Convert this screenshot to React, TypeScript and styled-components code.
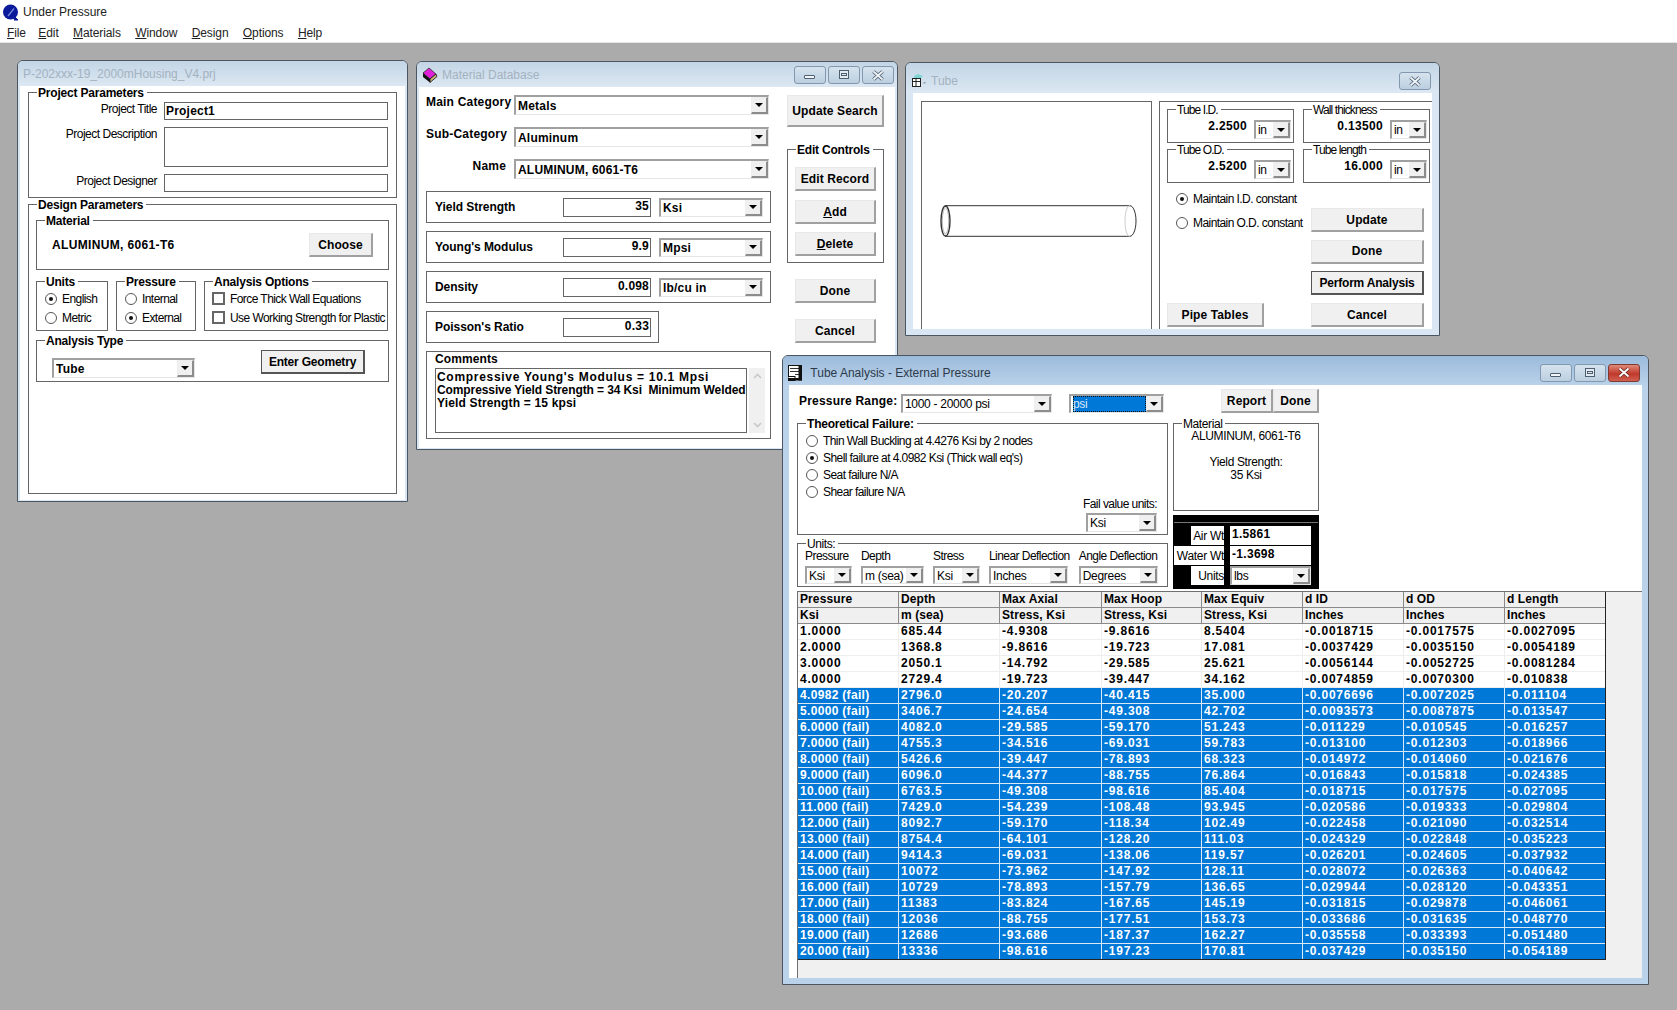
import React from "react";
import styled, { createGlobalStyle } from "styled-components";

const GlobalStyle = createGlobalStyle`
  html, body { margin: 0; padding: 0; background: #ababab; }
  body { font-family: "Liberation Sans", Arial, sans-serif; font-size: 12px; color: #000; overflow: hidden; }
  * { box-sizing: border-box; }
`;

const Page = styled.div`
  position: relative;
  width: 1677px;
  height: 1010px;
  display: flex;
  flex-direction: column;
  background: #ababab;
  overflow: hidden;
`;
const AppTitle = styled.div`
  height: 23px;
  background: #fff;
  display: flex;
  align-items: center;
  padding-left: 2px;
  gap: 3px;
  color: #222;
  font-size: 12px;
`;
const MenuBar = styled.div`
  height: 20px;
  background: #fff;
  border-bottom: 1px solid #e4e4e4;
  display: flex;
  padding-left: 7px;
  gap: 14.4px;
  align-items: center;
  color: #222;
  letter-spacing: -0.1px;
  & > :first-child {
    margin-right: -2px;
  }
`;

// mdi windows
const Window = styled.div<{ $x: number; $y: number; $w: number; $h: number; $active?: boolean }>`
  position: absolute;
  left: ${(p) => p.$x}px;
  top: ${(p) => p.$y}px;
  width: ${(p) => p.$w}px;
  height: ${(p) => p.$h}px;
  border: 1px solid #4c5660;
  border-radius: 6px 6px 0 0;
  background: ${(p) => (p.$active ? "#bad2ea" : "#d9e6f3")};
  display: flex;
  flex-direction: column;
  overflow: hidden;
`;
const TitleBar = styled.div<{ $h: number; $active?: boolean; $pad?: number; $pt?: number }>`
  height: ${(p) => p.$h}px;
  flex: none;
  display: flex;
  align-items: center;
  padding: ${(p) => p.$pt ?? 0}px ${(p) => p.$pad ?? 3}px 0 5px;
  gap: 4px;
  color: ${(p) => (p.$active ? "#2c3a48" : "#a3b2c0")};
  background: ${(p) =>
    p.$active ? "linear-gradient(#9cbbdb, #b9d1ea)" : "linear-gradient(#c3d5e5, #dce8f3)"};
  letter-spacing: 0;
`;
const Controls = styled.div`
  margin-left: auto;
  display: flex;
  gap: 2px;
`;
const CtlBtn = styled.div<{ $red?: boolean }>`
  width: 32px;
  height: 18px;
  border: 1px solid ${(p) => (p.$red ? "#7d3a32" : "#8298ae")};
  border-radius: 3px;
  background: ${(p) =>
    p.$red ? "linear-gradient(#e08a78, #c0392b 55%, #d2604f)" : "linear-gradient(#d6e3ee, #bccfe0)"};
  display: flex;
  align-items: center;
  justify-content: center;
`;
const Client = styled.div<{ $mx: number; $mb: number; $pad?: string }>`
  flex: 1;
  min-height: 0;
  margin: 0 ${(p) => p.$mx}px ${(p) => p.$mb}px;
  background: #fff;
  padding: ${(p) => p.$pad ?? "0"};
  display: flex;
  flex-direction: column;
`;

const Group = styled.div<{ $w?: number; $h?: number; $pad?: string; $mt?: number }>`
  position: relative;
  flex: none;
  width: ${(p) => (p.$w ? `${p.$w}px` : "auto")};
  height: ${(p) => (p.$h ? `${p.$h}px` : "auto")};
  border: 1px solid #666;
  padding: ${(p) => p.$pad ?? "0"};
  margin-top: ${(p) => p.$mt ?? 0}px;
`;
const Legend = styled.span<{ $regular?: boolean; $narrow?: boolean }>`
  position: absolute;
  left: 8px;
  top: -7px;
  height: 14px;
  line-height: 14px;
  padding: 0 3px 0 1px;
  background: #fff;
  font-weight: ${(p) => (p.$regular ? 400 : 700)};
  letter-spacing: ${(p) => (p.$narrow ? "-0.9px" : p.$regular ? "-0.4px" : "-0.2px")};
  white-space: nowrap;
`;
const Btn = styled.div<{ $w: number; $h?: number; $dark?: boolean; $mt?: number }>`
  flex: none;
  width: ${(p) => p.$w}px;
  height: ${(p) => p.$h ?? 24}px;
  margin-top: ${(p) => p.$mt ?? 0}px;
  background: #f0f0f0;
  border: 1px solid ${(p) => (p.$dark ? "#555" : "#e8e8e8")};
  border-right: 2px solid ${(p) => (p.$dark ? "#555" : "#a0a0a0")};
  border-bottom: 2px solid ${(p) => (p.$dark ? "#555" : "#a0a0a0")};
  display: flex;
  align-items: center;
  justify-content: center;
  font-weight: 700;
  letter-spacing: ${(p) => (p.$dark ? "-0.2px" : "0.1px")};
  white-space: nowrap;
`;
const ComboBox = styled.div<{ $w: number; $h?: number; $bold?: boolean; $mt?: number }>`
  flex: none;
  width: ${(p) => p.$w}px;
  height: ${(p) => p.$h ?? 19}px;
  margin-top: ${(p) => p.$mt ?? 0}px;
  background: #fff;
  border: 1px solid #e6e6e6;
  border-top: 2px solid #a0a0a0;
  border-left: 2px solid #a0a0a0;
  display: flex;
  align-items: center;
  padding-left: 2px;
  font-weight: ${(p) => (p.$bold ? 700 : 400)};
  letter-spacing: ${(p) => (p.$bold ? "0.2px" : "-0.3px")};
  overflow: hidden;
  white-space: nowrap;
`;
const ComboValue = styled.span<{ $sel?: boolean }>`
  flex: 1;
  min-width: 0;
  align-self: stretch;
  display: flex;
  align-items: center;
  overflow: hidden;
  ${(p) => (p.$sel ? "background:#0078d7;color:#d8e8f8;outline:1px dotted #111;outline-offset:-1px;" : "")}
`;
const ComboArrow = styled.span`
  flex: none;
  width: 17px;
  align-self: stretch;
  background: #f0f0f0;
  border: 1px solid #eee;
  border-right: 2px solid #8c8c8c;
  border-bottom: 2px solid #8c8c8c;
  display: flex;
  align-items: center;
  justify-content: center;
  &::after {
    content: "";
    border: 4px solid transparent;
    border-top: 4px solid #000;
    border-bottom: 0;
  }
`;
function Combo(props: { w: number; h?: number; bold?: boolean; mt?: number; sel?: boolean; children: React.ReactNode }) {
  return (
    <ComboBox $w={props.w} $h={props.h} $bold={props.bold} $mt={props.mt}>
      <ComboValue $sel={props.sel}>{props.children}</ComboValue>
      <ComboArrow />
    </ComboBox>
  );
}
const TextBox = styled.div<{ $w?: number; $h: number }>`
  flex: none;
  width: ${(p) => (p.$w ? `${p.$w}px` : "auto")};
  height: ${(p) => p.$h}px;
  border: 1px solid #666;
  background: #fff;
  padding: 0 1px 2px 2px;
  display: flex;
  align-items: center;
  justify-content: flex-end;
  font-weight: 700;
  letter-spacing: 0.2px;
`;

const OptionRow = styled.div<{ $h: number }>`
  height: ${(p) => p.$h}px;
  display: flex;
  align-items: center;
  gap: 5px;
  letter-spacing: -0.57px;
  white-space: nowrap;
`;
const RadioDot = styled.span<{ $on?: boolean }>`
  flex: none;
  width: 12px;
  height: 12px;
  border-radius: 50%;
  border: 1.5px solid #555;
  background: #fff;
  display: flex;
  align-items: center;
  justify-content: center;
  &::after {
    content: "";
    width: 4px;
    height: 4px;
    border-radius: 50%;
    background: ${(p) => (p.$on ? "#111" : "transparent")};
  }
`;
const CheckBox = styled.span`
  flex: none;
  width: 13px;
  height: 13px;
  border: 2px solid #666;
  background: #fff;
`;

/* ---------- project window ---------- */
const ProjectGrid = styled.div`
  display: grid;
  grid-template-columns: 128px 224px;
  column-gap: 7px;
  grid-template-rows: 18px 40px 18px;
  row-gap: 7px;
`;
const FieldLabel = styled.div`
  text-align: right;
  letter-spacing: -0.5px;
  line-height: 14px;
`;
const OutlineBox = styled.div`
  border: 1px solid #666;
  padding: 1px 1px;
  font-weight: 700;
  letter-spacing: 0.2px;
  line-height: 14px;
`;
const BoldText = styled.span`
  font-weight: 700;
  letter-spacing: 0.35px;
`;
const SpacedRow = styled.div`
  height: 100%;
  display: flex;
  align-items: center;
  justify-content: space-between;
`;
const GroupRow = styled.div<{ $gap: number; $mt: number }>`
  display: flex;
  gap: ${(p) => p.$gap}px;
  margin-top: ${(p) => p.$mt}px;
`;
const TopRow = styled.div`
  display: flex;
  justify-content: space-between;
  align-items: flex-start;
`;

/* ---------- material window ---------- */
const DbLayout = styled.div`
  display: flex;
  gap: 16px;
`;
const Column = styled.div<{ $center?: boolean; $gap?: number }>`
  display: flex;
  flex-direction: column;
  align-items: ${(p) => (p.$center ? "center" : "stretch")};
  gap: ${(p) => p.$gap ?? 0}px;
`;
const CategoryRow = styled.div`
  display: flex;
  gap: 8px;
  margin-bottom: 12px;
`;
const CategoryLabel = styled.div`
  width: 80px;
  text-align: right;
  font-weight: 700;
  letter-spacing: 0.2px;
  white-space: nowrap;
`;
const PropRow = styled.div<{ $w: number }>`
  width: ${(p) => p.$w}px;
  height: 32px;
  border: 1px solid #666;
  margin-bottom: 8px;
  display: flex;
  align-items: center;
  padding-left: 8px;
  gap: 8px;
`;
const PropLabel = styled.div`
  width: 120px;
  font-weight: 700;
  letter-spacing: -0.05px;
  margin-top: -1px;
`;
const CommentHead = styled.div`
  font-weight: 700;
  letter-spacing: 0.1px;
  line-height: 14px;
  height: 14px;
`;
const CommentBody = styled.div`
  display: flex;
  gap: 2px;
  margin-top: 2px;
`;
const CommentText = styled.div`
  width: 312px;
  height: 65px;
  border: 1px solid #666;
  padding: 2px 0 0 1px;
  font-weight: 700;
  line-height: 13px;
  overflow: hidden;
`;
const CommentLine = styled.div<{ $ls: number }>`
  letter-spacing: ${(p) => p.$ls}px;
  white-space: nowrap;
`;
const ScrollTrack = styled.div`
  width: 16px;
  height: 65px;
  background: #f0f0f0;
  display: flex;
  flex-direction: column;
  justify-content: space-between;
  align-items: center;
  padding: 5px 0;
`;

/* ---------- tube window ---------- */
const TubeLayout = styled.div`
  flex: 1;
  min-height: 0;
  display: flex;
  gap: 7px;
`;
const Picture = styled.div`
  width: 231px;
  border: 1px solid #666;
  border-bottom: 0;
  display: flex;
  align-items: center;
  padding: 10px 0 0 18px;
`;
const TubeFrame = styled.div`
  flex: 1;
  border-left: 1px solid #666;
  border-top: 1px solid #666;
  padding: 7px 0 0 7px;
`;
const SizeGrid = styled.div`
  display: grid;
  grid-template-columns: 127px 127px;
  column-gap: 9px;
  row-gap: 6px;
`;
const SizeBox = styled.div`
  position: relative;
  height: 34px;
  border: 1px solid #666;
  padding: 9px 2px 0 0;
  display: flex;
  justify-content: flex-end;
  gap: 7px;
`;
const SizeValue = styled.span`
  font-weight: 700;
  letter-spacing: 0.35px;
  line-height: 14px;
`;
const TubeLower = styled.div`
  display: flex;
  height: 144px;
`;
const TubeLeft = styled.div`
  width: 144px;
  height: 100%;
  padding: 4px 0 0 9px;
  display: flex;
  flex-direction: column;
`;
const PipeWrap = styled.div`
  margin: auto 0 0 -9px;
`;
const TubeButtons = styled.div`
  display: flex;
  flex-direction: column;
  gap: 7.7px;
  padding-top: 25px;
`;

/* ---------- analysis window ---------- */
const AnalysisTop = styled.div`
  display: flex;
  align-items: flex-start;
  padding: 4px 0 0 10px;
  height: 28px;
`;
const RangeLabel = styled.div`
  width: 102px;
  font-weight: 700;
  letter-spacing: 0.2px;
  margin-top: 5px;
`;
const PsiWrap = styled.div`
  margin: 5px 57px 0 17px;
`;
const Panels = styled.div`
  display: grid;
  grid-template-columns: 371px 146px;
  gap: 5px;
  margin: 10px 0 0 8px;
`;
const FailBody = styled.div`
  height: 100%;
  display: flex;
  justify-content: space-between;
  padding: 8px 10px 2px 8px;
`;
const FailUnit = styled.div`
  display: flex;
  flex-direction: column;
  align-items: flex-end;
  justify-content: flex-end;
  gap: 2px;
  letter-spacing: -0.55px;
`;
const UnitsRow = styled.div`
  display: flex;
  gap: 9px;
  padding: 5px 0 0 7px;
`;
const UnitCol = styled.div`
  display: flex;
  flex-direction: column;
  gap: 3px;
  line-height: 14px;
  letter-spacing: -0.55px;
  white-space: nowrap;
`;
const MaterialText = styled.div`
  padding-top: 6px;
  text-align: center;
  line-height: 13px;
  letter-spacing: -0.35px;
`;
const WeightBox = styled.div`
  height: 74px;
  background: #000;
  border-top: 6px solid #000;
  display: flex;
  flex-direction: column;
`;
const WeightInner = styled.div`
  flex: 1;
  margin: 1px 1px 0 1px;
  padding: 3px 7px 0 0;
  border-top: 1px solid #777;
  display: flex;
  flex-direction: column;
  gap: 1px;
`;
const WeightRow = styled.div`
  display: flex;
  justify-content: flex-end;
  gap: 6px;
  height: 19px;
`;
const WeightLabel = styled.div<{ $w: number }>`
  width: ${(p) => p.$w}px;
  background: #fff;
  text-align: right;
  overflow: hidden;
  white-space: nowrap;
  letter-spacing: -0.3px;
  line-height: 20px;
`;
const WeightValue = styled.div`
  width: 81px;
  background: #fff;
  font-weight: 700;
  padding-left: 2px;
  letter-spacing: 0.3px;
  line-height: 16px;
`;
const GridArea = styled.div`
  flex: 1;
  min-height: 0;
  margin: 2px 0 0 8px;
  border-top: 1px solid #707070;
  border-left: 1px solid #707070;
  background: #f0f0f0;
`;
const Table = styled.div`
  width: 808px;
  border-right: 1px solid #222;
  border-bottom: 1px solid #222;
`;
const Cells = styled.div<{ $head?: boolean; $fail?: boolean }>`
  display: grid;
  grid-template-columns: 101px 101px 102px 100px 101px 101px 101px 100px;
  height: 16px;
  background: ${(p) => (p.$head ? "#f0f0f0" : p.$fail ? "#0078d7" : "#fff")};
  color: ${(p) => (p.$fail ? "#fff" : "#000")};
  border-bottom: 1px solid ${(p) => (p.$head ? "#8a8a8a" : p.$fail ? "#dbe9f6" : "#eeeeee")};
  &:last-child {
    border-bottom: 0;
    height: 15px;
  }
`;
const Cell = styled.div<{ $head?: boolean; $fail?: boolean; $tight?: boolean }>`
  padding-left: 2px;
  border-right: 1px solid ${(p) => (p.$head ? "#8a8a8a" : p.$fail ? "#dbe9f6" : "#eeeeee")};
  font-weight: 700;
  line-height: 15px;
  letter-spacing: ${(p) => (p.$head ? "0.1px" : p.$tight ? "0.32px" : "0.8px")};
  white-space: nowrap;
  overflow: hidden;
  &:last-child {
    border-right: 0;
  }
`;

const head1 = ["Pressure", "Depth", "Max Axial", "Max Hoop", "Max Equiv", "d ID", "d OD", "d Length"];
const head2 = ["Ksi", "m (sea)", "Stress, Ksi", "Stress, Ksi", "Stress, Ksi", "Inches", "Inches", "Inches"];
const rows = [
  "1.0000|685.44|-4.9308|-9.8616|8.5404|-0.0018715|-0.0017575|-0.0027095",
  "2.0000|1368.8|-9.8616|-19.723|17.081|-0.0037429|-0.0035150|-0.0054189",
  "3.0000|2050.1|-14.792|-29.585|25.621|-0.0056144|-0.0052725|-0.0081284",
  "4.0000|2729.4|-19.723|-39.447|34.162|-0.0074859|-0.0070300|-0.010838",
  "4.0982 (fail)|2796.0|-20.207|-40.415|35.000|-0.0076696|-0.0072025|-0.011104",
  "5.0000 (fail)|3406.7|-24.654|-49.308|42.702|-0.0093573|-0.0087875|-0.013547",
  "6.0000 (fail)|4082.0|-29.585|-59.170|51.243|-0.011229|-0.010545|-0.016257",
  "7.0000 (fail)|4755.3|-34.516|-69.031|59.783|-0.013100|-0.012303|-0.018966",
  "8.0000 (fail)|5426.6|-39.447|-78.893|68.323|-0.014972|-0.014060|-0.021676",
  "9.0000 (fail)|6096.0|-44.377|-88.755|76.864|-0.016843|-0.015818|-0.024385",
  "10.000 (fail)|6763.5|-49.308|-98.616|85.404|-0.018715|-0.017575|-0.027095",
  "11.000 (fail)|7429.0|-54.239|-108.48|93.945|-0.020586|-0.019333|-0.029804",
  "12.000 (fail)|8092.7|-59.170|-118.34|102.49|-0.022458|-0.021090|-0.032514",
  "13.000 (fail)|8754.4|-64.101|-128.20|111.03|-0.024329|-0.022848|-0.035223",
  "14.000 (fail)|9414.3|-69.031|-138.06|119.57|-0.026201|-0.024605|-0.037932",
  "15.000 (fail)|10072|-73.962|-147.92|128.11|-0.028072|-0.026363|-0.040642",
  "16.000 (fail)|10729|-78.893|-157.79|136.65|-0.029944|-0.028120|-0.043351",
  "17.000 (fail)|11383|-83.824|-167.65|145.19|-0.031815|-0.029878|-0.046061",
  "18.000 (fail)|12036|-88.755|-177.51|153.73|-0.033686|-0.031635|-0.048770",
  "19.000 (fail)|12686|-93.686|-187.37|162.27|-0.035558|-0.033393|-0.051480",
  "20.000 (fail)|13336|-98.616|-197.23|170.81|-0.037429|-0.035150|-0.054189",
];

const MinIcon = () => (
  <svg width="14" height="10" viewBox="0 0 14 10">
    <rect x="1.5" y="5.5" width="10" height="3" rx="0.5" fill="#f2f6fa" stroke="#4e5f70" />
  </svg>
);
const MaxIcon = () => (
  <svg width="12" height="10" viewBox="0 0 12 10">
    <rect x="1.5" y="0.5" width="9" height="8" fill="#e2ebf3" stroke="#4e5f70" />
    <rect x="3.5" y="3.5" width="5" height="2" fill="#dfe8f1" stroke="#4e5f70" />
  </svg>
);
const CloseIcon = ({ red }: { red?: boolean }) => (
  <svg width="14" height="11" viewBox="0 0 14 11">
    <path d="M2.5 1.5 L11.5 9.5 M11.5 1.5 L2.5 9.5" stroke={red ? "#6d2a22" : "#4e5f70"} strokeWidth="3.6" />
    <path d="M2.5 1.5 L11.5 9.5 M11.5 1.5 L2.5 9.5" stroke={red ? "#fff" : "#eef3f8"} strokeWidth="1.8" />
  </svg>
);
const AppLogo = () => (
  <svg width="18" height="18" viewBox="0 0 18 18">
    <circle cx="8.5" cy="9" r="7.5" fill="#0a1a9a" />
    <path d="M6 13 L12 5.5" stroke="#6f84d8" strokeWidth="1.4" />
    <path d="M11 12 L16 17 L12 17" fill="#0a1a9a" stroke="#0a1a9a" />
  </svg>
);
const BookIcon = () => (
  <svg width="16" height="16" viewBox="0 0 16 16">
    <path d="M1 6 L7 1 L14 7 L8 12 Z" fill="#e020d8" stroke="#222" strokeWidth="0.7" />
    <path d="M1 6 L8 12 L8 15.5 L1 10 Z" fill="#111" />
    <path d="M8 12 L14 7 L15 9.5 L8 15.5 Z" fill="#c9b27e" stroke="#111" strokeWidth="0.8" />
  </svg>
);
const TubeIcon = () => (
  <svg width="16" height="14" viewBox="0 0 16 14">
    <path d="M3 2 L7 0 L12 2 L9 5 L3 5 Z" fill="#7fd6d0" />
    <rect x="1.5" y="4.5" width="8" height="8" fill="#fff" stroke="#222" />
    <path d="M2 7.5 H9 M5 5 V12" stroke="#222" />
    <rect x="12.5" y="8" width="2" height="1.5" fill="#8a9aa8" />
  </svg>
);
const DocIcon = () => (
  <svg width="15" height="16" viewBox="0 0 15 16">
    <rect x="0.5" y="0.5" width="12" height="14" fill="#fff" stroke="#111" />
    <path d="M2 3.5 H11 M2 6.5 H11 M7 9.5 H11" stroke="#333" />
    <rect x="0" y="11.5" width="7" height="4" fill="#fff" stroke="#111" />
    <rect x="0" y="13" width="14" height="2.5" fill="#111" />
    <rect x="10.5" y="0" width="3.5" height="15.5" fill="#111" />
  </svg>
);
const Chevron = ({ up }: { up?: boolean }) => (
  <svg width="9" height="6" viewBox="0 0 9 6">
    <path d={up ? "M1 5 L4.5 1.5 L8 5" : "M1 1 L4.5 4.5 L8 1"} fill="none" stroke="#c8c8c8" strokeWidth="1.6" />
  </svg>
);
const TubeDrawing = () => (
  <svg width="197" height="32" viewBox="0 0 197 32">
    <path d="M5 0.7 H190" stroke="#333" strokeWidth="1" fill="none" />
    <path d="M5 31.3 H190" stroke="#333" strokeWidth="1" fill="none" />
    <path d="M190 0.7 C 193 0.7 196 7 196 16 C 196 25 193 31.3 190 31.3" stroke="#333" fill="none" />
    <path d="M190 0.7 C 187 0.7 185 7 185 16 C 185 25 187 31.3 190 31.3" stroke="#ccc" fill="none" />
    <ellipse cx="5.5" cy="16" rx="4.5" ry="15" fill="none" stroke="#333" strokeWidth="1.4" />
    <ellipse cx="5.5" cy="16" rx="3.2" ry="13" fill="none" stroke="#888" strokeWidth="0.6" />
  </svg>
);

export default function App() {
  return (
    <Page>
      <GlobalStyle />
      <AppTitle>
        <AppLogo />
        Under Pressure
      </AppTitle>
      <MenuBar>
        <span><u>F</u>ile</span>
        <span><u>E</u>dit</span>
        <span><u>M</u>aterials</span>
        <span><u>W</u>indow</span>
        <span><u>D</u>esign</span>
        <span><u>O</u>ptions</span>
        <span><u>H</u>elp</span>
      </MenuBar>

      {/* project */}
      <Window $x={17} $y={60} $w={391} $h={442}>
        <TitleBar $h={25} $pt={1}>P-202xxx-19_2000mHousing_V4.prj</TitleBar>
        <Client $mx={2} $mb={1} $pad="6px 8px 0 8px">
          <Group $h={106} $pad="9px 0 0 0">
            <Legend>Project Parameters</Legend>
            <ProjectGrid>
              <FieldLabel>Project Title</FieldLabel>
              <OutlineBox>Project1</OutlineBox>
              <FieldLabel>Project Description</FieldLabel>
              <OutlineBox />
              <FieldLabel>Project Designer</FieldLabel>
              <OutlineBox />
            </ProjectGrid>
          </Group>
          <Group $h={290} $mt={6} $pad="15px 7px 0 7px">
            <Legend>Design Parameters</Legend>
            <Group $h={50} $pad="0 15px">
              <Legend>Material</Legend>
              <SpacedRow>
                <BoldText>ALUMINUM, 6061-T6</BoldText>
                <Btn $w={64}>Choose</Btn>
              </SpacedRow>
            </Group>
            <GroupRow $gap={8} $mt={11}>
              <Group $w={72} $h={50} $pad="7px 0 0 8px">
                <Legend>Units</Legend>
                <OptionRow $h={19}><RadioDot $on />English</OptionRow>
                <OptionRow $h={19}><RadioDot />Metric</OptionRow>
              </Group>
              <Group $w={80} $h={50} $pad="7px 0 0 8px">
                <Legend>Pressure</Legend>
                <OptionRow $h={19}><RadioDot />Internal</OptionRow>
                <OptionRow $h={19}><RadioDot $on />External</OptionRow>
              </Group>
              <Group $w={184} $h={50} $pad="7px 0 0 7px">
                <Legend>Analysis Options</Legend>
                <OptionRow $h={19}><CheckBox />Force Thick Wall Equations</OptionRow>
                <OptionRow $h={19}><CheckBox />Use Working Strength for Plastic</OptionRow>
              </Group>
            </GroupRow>
            <Group $h={42} $mt={9} $pad="9px 23px 0 15px">
              <Legend>Analysis Type</Legend>
              <TopRow>
                <Combo w={143} h={20} mt={8} bold>Tube</Combo>
                <Btn $w={104} $dark>Enter Geometry</Btn>
              </TopRow>
            </Group>
          </Group>
        </Client>
      </Window>

      {/* material database */}
      <Window $x={416} $y={61} $w={482} $h={389}>
        <TitleBar $h={25} $pad={3} $pt={1}>
          <BookIcon />
          Material Database
          <Controls>
            <CtlBtn><MinIcon /></CtlBtn>
            <CtlBtn><MaxIcon /></CtlBtn>
            <CtlBtn><CloseIcon /></CtlBtn>
          </Controls>
        </TitleBar>
        <Client $mx={2} $mb={1} $pad="8px 0 0 7px">
          <DbLayout>
            <Column>
              <CategoryRow>
                <CategoryLabel>Main Category</CategoryLabel>
                <Combo w={255} h={20} bold>Metals</Combo>
              </CategoryRow>
              <CategoryRow>
                <CategoryLabel>Sub-Category</CategoryLabel>
                <Combo w={255} h={20} bold>Aluminum</Combo>
              </CategoryRow>
              <CategoryRow>
                <CategoryLabel>Name</CategoryLabel>
                <Combo w={255} h={20} bold>ALUMINUM, 6061-T6</Combo>
              </CategoryRow>
              <PropRow $w={345}>
                <PropLabel>Yield Strength</PropLabel>
                <TextBox $w={88} $h={19}>35</TextBox>
                <Combo w={104} bold>Ksi</Combo>
              </PropRow>
              <PropRow $w={345}>
                <PropLabel>Young's Modulus</PropLabel>
                <TextBox $w={88} $h={19}>9.9</TextBox>
                <Combo w={104} bold>Mpsi</Combo>
              </PropRow>
              <PropRow $w={345}>
                <PropLabel>Density</PropLabel>
                <TextBox $w={88} $h={19}>0.098</TextBox>
                <Combo w={104} bold>lb/cu in</Combo>
              </PropRow>
              <PropRow $w={233}>
                <PropLabel>Poisson's Ratio</PropLabel>
                <TextBox $w={88} $h={19}>0.33</TextBox>
              </PropRow>
              <Group $w={345} $h={88} $pad="0 0 0 8px">
                <CommentHead>Comments</CommentHead>
                <CommentBody>
                  <CommentText>
                    <CommentLine $ls={0.7}>Compressive Young's Modulus = 10.1 Mpsi</CommentLine>
                    <CommentLine $ls={-0.1}>Compressive Yield Strength = 34 Ksi&nbsp; Minimum Welded</CommentLine>
                    <CommentLine $ls={0.17}>Yield Strength = 15 kpsi</CommentLine>
                  </CommentText>
                  <ScrollTrack>
                    <Chevron up />
                    <Chevron />
                  </ScrollTrack>
                </CommentBody>
              </Group>
            </Column>
            <Column $center>
              <Btn $w={97} $h={32}>Update Search</Btn>
              <Group $w={97} $h={114} $mt={22} $pad="17px 0 0 7px">
                <Legend>Edit Controls</Legend>
                <Btn $w={81}>Edit Record</Btn>
                <Btn $w={81} $mt={9}><span><u>A</u>dd</span></Btn>
                <Btn $w={81} $mt={8}><span><u>D</u>elete</span></Btn>
              </Group>
              <Btn $w={81} $mt={16}>Done</Btn>
              <Btn $w={81} $mt={16}>Cancel</Btn>
            </Column>
          </DbLayout>
        </Client>
      </Window>

      {/* tube */}
      <Window $x={905} $y={62} $w={535} $h={274}>
        <TitleBar $h={30} $pad={8} $pt={6}>
          <TubeIcon />
          Tube
          <Controls>
            <CtlBtn><CloseIcon /></CtlBtn>
          </Controls>
        </TitleBar>
        <Client $mx={7} $mb={6} $pad="8px 0 0 8px">
          <TubeLayout>
            <Picture>
              <TubeDrawing />
            </Picture>
            <TubeFrame>
              <SizeGrid>
                <SizeBox>
                  <Legend $regular $narrow>Tube I.D.</Legend>
                  <SizeValue>2.2500</SizeValue>
                  <Combo w={37} mt={1}>in</Combo>
                </SizeBox>
                <SizeBox>
                  <Legend $regular $narrow>Wall thickness</Legend>
                  <SizeValue>0.13500</SizeValue>
                  <Combo w={37} mt={1}>in</Combo>
                </SizeBox>
                <SizeBox>
                  <Legend $regular $narrow>Tube O.D.</Legend>
                  <SizeValue>2.5200</SizeValue>
                  <Combo w={37} mt={1}>in</Combo>
                </SizeBox>
                <SizeBox>
                  <Legend $regular $narrow>Tube length</Legend>
                  <SizeValue>16.000</SizeValue>
                  <Combo w={37} mt={1}>in</Combo>
                </SizeBox>
              </SizeGrid>
              <TubeLower>
                <TubeLeft>
                  <OptionRow $h={24}><RadioDot $on />Maintain I.D. constant</OptionRow>
                  <OptionRow $h={24}><RadioDot />Maintain O.D. constant</OptionRow>
                  <PipeWrap>
                    <Btn $w={97}>Pipe Tables</Btn>
                  </PipeWrap>
                </TubeLeft>
                <TubeButtons>
                  <Btn $w={113}>Update</Btn>
                  <Btn $w={113}>Done</Btn>
                  <Btn $w={113} $dark>Perform Analysis</Btn>
                  <Btn $w={113}>Cancel</Btn>
                </TubeButtons>
              </TubeLower>
            </TubeFrame>
          </TubeLayout>
        </Client>
      </Window>

      {/* analysis */}
      <Window $x={782} $y={355} $w={867} $h={630} $active>
        <TitleBar $h={29} $active $pad={8} $pt={4}>
          <DocIcon />
          &nbsp;Tube Analysis - External Pressure
          <Controls>
            <CtlBtn><MinIcon /></CtlBtn>
            <CtlBtn><MaxIcon /></CtlBtn>
            <CtlBtn $red><CloseIcon red /></CtlBtn>
          </Controls>
        </TitleBar>
        <Client $mx={6} $mb={6}>
          <AnalysisTop>
            <RangeLabel>Pressure Range:</RangeLabel>
            <Combo w={151} mt={5}>1000 - 20000 psi</Combo>
            <PsiWrap>
              <Combo w={95} sel>psi</Combo>
            </PsiWrap>
            <Btn $w={52}>Report</Btn>
            <Btn $w={46}>Done</Btn>
          </AnalysisTop>
          <Panels>
            <Column $gap={8}>
              <Group $h={112}>
                <Legend>Theoretical Failure:</Legend>
                <FailBody>
                  <div>
                    <OptionRow $h={17}><RadioDot />Thin Wall Buckling at 4.4276 Ksi by 2 nodes</OptionRow>
                    <OptionRow $h={17}><RadioDot $on />Shell failure at 4.0982 Ksi (Thick wall eq's)</OptionRow>
                    <OptionRow $h={17}><RadioDot />Seat failure N/A</OptionRow>
                    <OptionRow $h={17}><RadioDot />Shear failure N/A</OptionRow>
                  </div>
                  <FailUnit>
                    Fail value units:
                    <Combo w={71}>Ksi</Combo>
                  </FailUnit>
                </FailBody>
              </Group>
              <Group $h={44}>
                <Legend $regular>Units:</Legend>
                <UnitsRow>
                  <UnitCol>Pressure<Combo w={47} h={18}>Ksi</Combo></UnitCol>
                  <UnitCol>Depth<Combo w={63} h={18}>m (sea)</Combo></UnitCol>
                  <UnitCol>Stress<Combo w={47} h={18}>Ksi</Combo></UnitCol>
                  <UnitCol>Linear Deflection<Combo w={79} h={18}>Inches</Combo></UnitCol>
                  <UnitCol>Angle Deflection<Combo w={79} h={18}>Degrees</Combo></UnitCol>
                </UnitsRow>
              </Group>
            </Column>
            <Column $gap={4}>
              <Group $h={88}>
                <Legend $regular>Material</Legend>
                <MaterialText>
                  ALUMINUM, 6061-T6
                  <br />
                  <br />
                  Yield Strength:
                  <br />
                  35 Ksi
                </MaterialText>
              </Group>
              <WeightBox>
                <WeightInner>
                  <WeightRow>
                    <WeightLabel $w={33}>Air Wt</WeightLabel>
                    <WeightValue>1.5861</WeightValue>
                  </WeightRow>
                  <WeightRow>
                    <WeightLabel $w={50}>Water Wt</WeightLabel>
                    <WeightValue>-1.3698</WeightValue>
                  </WeightRow>
                  <WeightRow>
                    <WeightLabel $w={33}>Units</WeightLabel>
                    <Combo w={81}>lbs</Combo>
                  </WeightRow>
                </WeightInner>
              </WeightBox>
            </Column>
          </Panels>
          <GridArea>
            <Table>
              <Cells $head>{head1.map((h) => <Cell $head key={h}>{h}</Cell>)}</Cells>
              <Cells $head>{head2.map((h, i) => <Cell $head key={i}>{h}</Cell>)}</Cells>
              {rows.map((r) => {
                const parts = r.split("|");
                const fail = parts[0].includes("fail");
                return (
                  <Cells $fail={fail} key={r}>
                    {parts.map((c, i) => <Cell $fail={fail} $tight={c.includes("fail")} key={i}>{c}</Cell>)}
                  </Cells>
                );
              })}
            </Table>
          </GridArea>
        </Client>
      </Window>
    </Page>
  );
}
